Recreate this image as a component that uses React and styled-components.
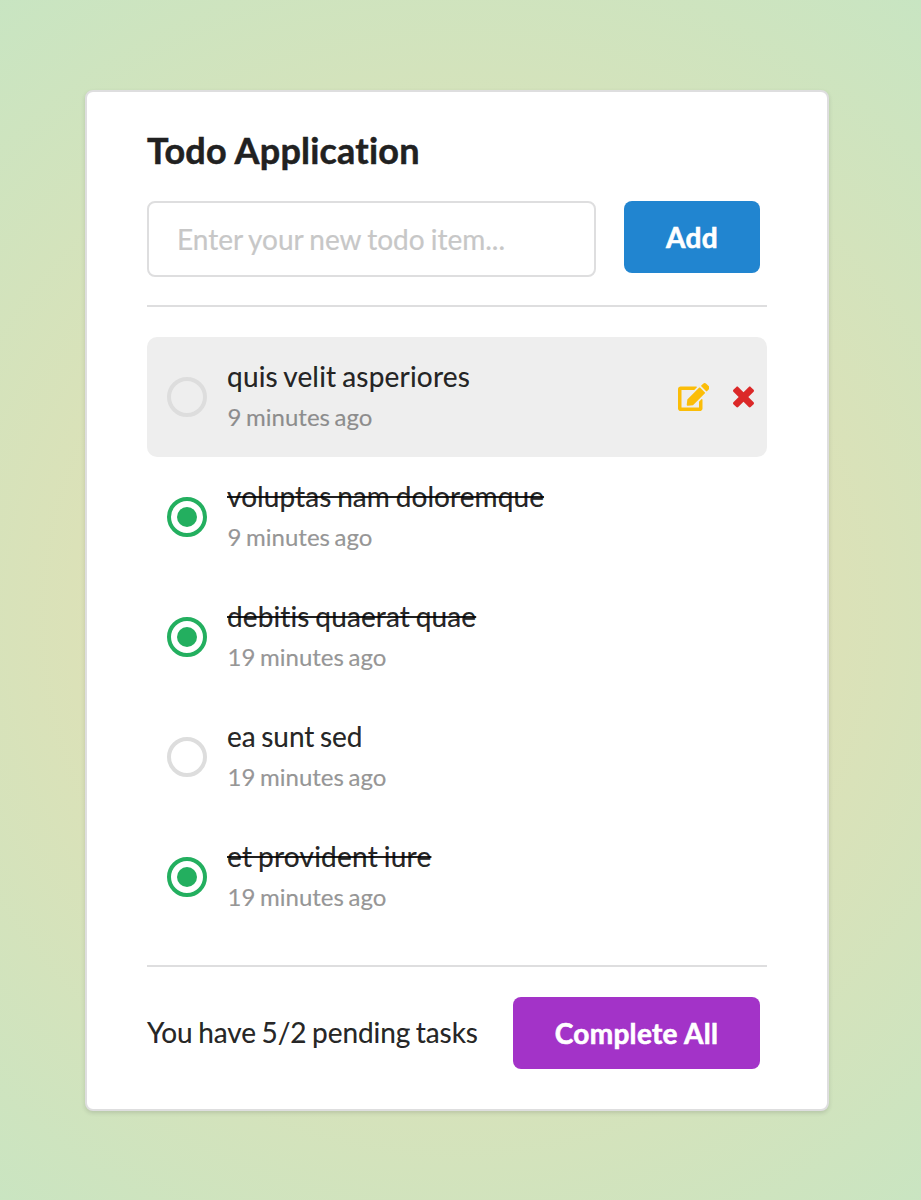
import React from "react";
import styled, { createGlobalStyle } from "styled-components";

const Global = createGlobalStyle`
  * { box-sizing: border-box; }
  body { margin: 0; }
`;

const Page = styled.main`
  min-height: 1200px;
  padding: 90px 92px 89px 85px;
  font-family: Lato, "Liberation Sans", sans-serif;
  font-size: 28px;
  line-height: 40px;
  font-variant-ligatures: none;
  -webkit-text-stroke: 0.2px currentColor;
  color: rgba(0, 0, 0, 0.87);
  background: radial-gradient(circle 775px at 457px 618px, #eedeae 0%, #c8e5c2 100%);
`;

const Card = styled.section`
  height: 1021px;
  padding: 35px 60px 0;
  background: #fff;
  border: 2px solid #dededf;
  border-radius: 8px;
  box-shadow: 0 2px 4px rgba(34, 36, 38, 0.15);
`;

const Title = styled.h1`
  margin: 0 0 28px;
  font-size: 36px;
  line-height: 46px;
  font-weight: 700;
  letter-spacing: 0.2px;
  -webkit-text-stroke: 0.5px #212121;
  color: #212121;
`;

const Form = styled.form`
  display: flex;
  align-items: flex-start;
  justify-content: space-between;
  padding-right: 7px;
`;

const TextInput = styled.input`
  width: 449px;
  height: 76px;
  padding: 0 28px;
  font: inherit;
  word-spacing: -1px;
  color: inherit;
  background: #fff;
  border: 2px solid #dededf;
  border-radius: 8px;
  outline: none;
  &::placeholder {
    color: #c7c7c7;
    opacity: 1;
    -webkit-text-stroke: 0.2px #c7c7c7;
  }
`;

const Button = styled.button`
  width: ${(p) => p.$width}px;
  height: 72px;
  padding: 0;
  border: 0;
  border-radius: 8px;
  font: 700 28px/28px Lato, "Liberation Sans", sans-serif;
  letter-spacing: 0.3px;
  -webkit-text-stroke: 0.6px #fff;
  color: #fff;
  background: ${(p) => p.$color};
`;

const Divider = styled.hr`
  height: 2px;
  margin: 28px 0 30px;
  border: 0;
  background: #dededf;
`;

const List = styled.ul`
  margin: 0;
  padding: 0;
  list-style: none;
`;

const Item = styled.li`
  display: flex;
  align-items: center;
  height: 120px;
  padding: 0 13px 0 20px;
  border-radius: 10px;
  background: ${(p) => (p.$active ? "#eee" : "transparent")};
`;

const Radio = styled.span`
  display: grid;
  place-items: center;
  width: 40px;
  height: 40px;
  margin-right: 20px;
  border: 4px solid ${(p) => (p.$done ? "#23af5f" : "#ddd")};
  border-radius: 50%;
  &::after {
    content: "";
    width: 20px;
    height: 20px;
    border-radius: 50%;
    background: ${(p) => (p.$done ? "#23af5f" : "transparent")};
  }
`;

const ItemText = styled.div`
  flex: 1;
`;

const ItemName = styled.div`
  height: 40px;
  line-height: 38px;
  word-spacing: -1.5px;
  letter-spacing: ${(p) => p.$tracking}px;
  text-decoration: ${(p) => (p.$done ? "line-through" : "none")};
`;

const ItemTime = styled.div`
  padding-left: 0.5px;
  font-size: 24px;
  word-spacing: -1.5px;
  -webkit-text-stroke: 0.2px #8c8c8c;
  color: rgba(0, 0, 0, 0.43);
`;

const Actions = styled.div`
  display: flex;
  align-items: center;
  gap: 24px;
  padding-bottom: 1px;
`;

const Icon = styled.svg`
  display: block;
  fill: ${(p) => p.$color};
`;

const Footer = styled.footer`
  display: flex;
  align-items: center;
  justify-content: space-between;
  padding-right: 7px;
`;

const Summary = styled.div`
  height: 40px;
  line-height: 38px;
  letter-spacing: -0.08px;
  word-spacing: -1.5px;
  white-space: nowrap;
`;

const todos = [
  { name: "quis velit asperiores", time: "9 minutes ago", active: true, tracking: 0.2 },
  { name: "voluptas nam doloremque", time: "9 minutes ago", done: true, tracking: 0.08 },
  { name: "debitis quaerat quae", time: "19 minutes ago", done: true, tracking: 0.12 },
  { name: "ea sunt sed", time: "19 minutes ago", tracking: -0.03 },
  { name: "et provident iure", time: "19 minutes ago", done: true, tracking: 0.22 },
];

const EditIcon = () => (
  <Icon $color="#fbbd08" width="31.5" height="28" viewBox="0 0 576 512">
    <path d="M402.6 83.2l90.2 90.2c3.8 3.8 3.8 10 0 13.8L274.4 405.6l-92.8 10.3c-12.4 1.4-22.9-9.1-21.5-21.5l10.3-92.8L388.8 83.2c3.8-3.8 10-3.8 13.8 0zm162-22.9l-48.8-48.8c-15.2-15.2-39.9-15.2-55.2 0l-35.4 35.4c-3.8 3.8-3.8 10 0 13.8l90.2 90.2c3.8 3.8 10 3.8 13.8 0l35.4-35.4c15.2-15.3 15.2-40 0-55.2zM384 346.2V448H64V128h229.8c3.2 0 6.2-1.3 8.5-3.5l40-40c7.6-7.6 2.2-20.5-8.5-20.5H48C21.5 64 0 85.5 0 112v352c0 26.5 21.5 48 48 48h352c26.5 0 48-21.5 48-48V306.2c0-10.7-12.9-16-20.5-8.5l-40 40c-2.2 2.3-3.5 5.3-3.5 8.5z" />
  </Icon>
);

const CloseIcon = () => (
  <Icon $color="#db2828" width="21" height="28" viewBox="0 0 384 512">
    <path d="M323.1 441l53.9-53.9c9.4-9.4 9.4-24.5 0-33.9L279.8 256l97.2-97.2c9.4-9.4 9.4-24.5 0-33.9L323.1 71c-9.4-9.4-24.5-9.4-33.9 0L192 168.2 94.8 71c-9.4-9.4-24.5-9.4-33.9 0L7 124.9c-9.4 9.4-9.4 24.5 0 33.9l97.2 97.2L7 353.2c-9.4 9.4-9.4 24.5 0 33.9L60.9 441c9.4 9.4 24.5 9.4 33.9 0l97.2-97.2 97.2 97.2c9.3 9.3 24.5 9.3 33.9 0z" />
  </Icon>
);

export default function App() {
  return (
    <Page>
      <Global />
      <Card>
        <Title>Todo Application</Title>
        <Form>
          <TextInput placeholder="Enter your new todo item..." />
          <Button type="button" $width={136} $color="#2185d0">Add</Button>
        </Form>
        <Divider />
        <List>
          {todos.map((t) => (
            <Item key={t.name} $active={t.active}>
              <Radio $done={t.done} />
              <ItemText>
                <ItemName $done={t.done} $tracking={t.tracking}>{t.name}</ItemName>
                <ItemTime>{t.time}</ItemTime>
              </ItemText>
              {t.active && (
                <Actions>
                  <EditIcon />
                  <CloseIcon />
                </Actions>
              )}
            </Item>
          ))}
        </List>
        <Divider />
        <Footer>
          <Summary>You have 5/2 pending tasks</Summary>
          <Button type="button" $width={247} $color="#a333c8">Complete All</Button>
        </Footer>
      </Card>
    </Page>
  );
}
